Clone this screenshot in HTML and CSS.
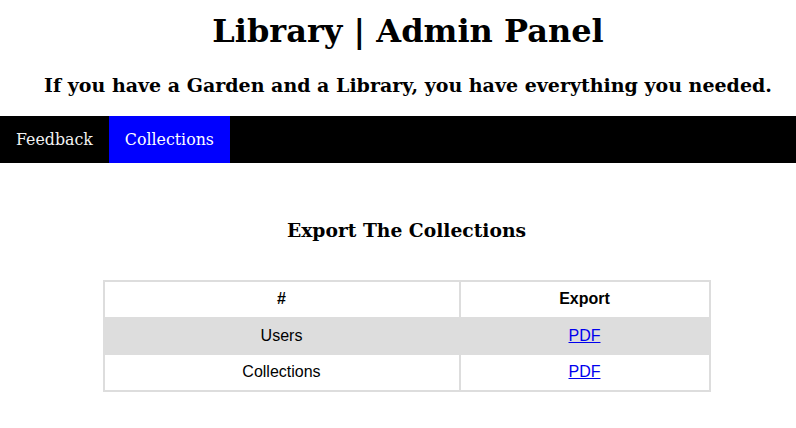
FILE: index.html
```html
<html lang="en">
<head>
    <meta charset="UTF-8" />
    <meta name="viewport" content="width=device-width, initial-scale=1.0" />
    <title>Library | Admin Panel</title>
    <link rel="stylesheet" href="styles.css">
</head>
<body>
    <div class="header">
      <h1>Library | Admin Panel</h1>
      <h3 class="quote">If you have a Garden and a Library, you have everything you needed.</h3>
    </div>

    <div class="topnav">
      <a href="#">Feedback</a>
      <a class="active" href="#">Collections</a>
    </div>

    <div class="content">
      <h3>Export The Collections</h3>
      <table class="export">
        <thead>
          <tr>
            <th class="col-name">#</th>
            <th>Export</th>
          </tr>
        </thead>
        <tbody>
          <tr>
            <td>Users</td>
            <td><a href="#">PDF</a></td>
          </tr>
          <tr>
            <td>Collections</td>
            <td><a href="#">PDF</a></td>
          </tr>
        </tbody>
      </table>
    </div>
</body>
</html>
```

FILE: styles.css
```css
body {
    margin: 0;
    font-family: "DejaVu Serif", serif;
}

.header {
    padding-left: 20px;
    text-align: center;
}

.header h1 {
    margin: 12px 0 24px;
    font-size: 32px;
}

.quote {
    margin: 0 0 20px;
    font-size: 19px;
}

.topnav {
    display: flex;
    background-color: #000;
}

.topnav a {
    padding: 14px 16px;
    color: #f2f2f2;
    text-decoration: none;
    font-size: 15.8px;
}

.topnav a.active {
    background-color: #0000ff;
    color: #fff;
}

.content {
    padding-left: 17px;
    text-align: center;
}

.content h3 {
    margin: 56px 0 39px;
    font-size: 18.72px;
}

.export {
    width: 608px;
    margin: 0 auto;
    border: 1px solid #dddddd;
    border-collapse: separate;
    border-spacing: 0;
    font-family: "Liberation Sans", Arial, sans-serif;
    font-size: 16px;
    line-height: 1.17;
}

.export th,
.export td {
    padding: 8px;
    border: 1px solid #dddddd;
    text-align: center;
}

.export .col-name {
    width: 338px;
}

.export tbody tr:nth-child(odd) {
    background-color: #dddddd;
}

.export a {
    color: #0000ee;
}
```
